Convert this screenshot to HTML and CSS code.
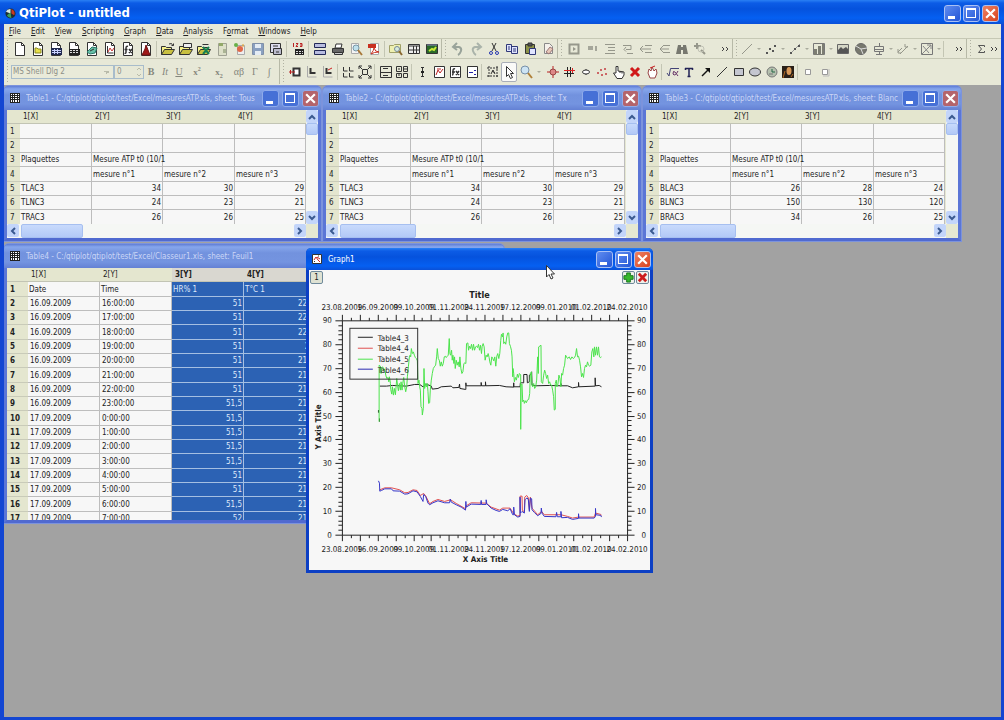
FILE: index.html
```html
<!DOCTYPE html>
<html lang="en">
<head>
<meta charset="utf-8">
<title>QtiPlot - untitled</title>
<link rel="stylesheet" href="styles.css">
</head>
<body>
<div class="app">
  <header class="titlebar titlebar-main">
    <svg class="logo" viewBox="0 0 12 12" aria-hidden="true"><circle cx="6" cy="6" r="5.5" fill="#1c2c34"/><path d="M1 4a5 5 0 0 1 5-3v5z" fill="#d8e8e0"/><path d="M7 1a5 5 0 0 1 3 7l-3-2z" fill="#c83a20"/><path d="M2 8l4-3 1 6a5 5 0 0 1-5-3z" fill="#3aa05a"/></svg>
    <h1 class="app-title">QtiPlot - untitled</h1>
    <div class="winbtns">
      <button class="wb wb-min" aria-label="Minimize"></button>
      <button class="wb wb-max" aria-label="Maximize"></button>
      <button class="wb wb-close" aria-label="Close"><svg viewBox="0 0 12 12"><path d="M2 2l8 8M10 2l-8 8"/></svg></button>
    </div>
  </header>
  <nav class="menubar">
    <button><u>F</u>ile</button><button><u>E</u>dit</button><button><u>V</u>iew</button><button><u>S</u>cripting</button><button><u>G</u>raph</button><button><u>D</u>ata</button><button><u>A</u>nalysis</button><button>F<u>o</u>rmat</button><button><u>W</u>indows</button><button><u>H</u>elp</button>
  </nav>
  <div class="toolrow">
    <div class="toolbar" data-tools="new project table matrix note graph fx surf | open opentpl openexcel appenddoc openobj save savetpl | ascii | dup print preview pdf | explorer results log"></div>
    <div class="toolbar" data-tools="undo redo cut copy paste clear"></div>
    <div class="toolbar wide-end" data-tools="play stop indent unindent left left2 find rescale more"></div>
    <div class="toolbar grow tight" data-tools="line v dots v linedots v bars v area pie box v vectors v threed v | more"></div>
    <div class="toolbar tight last" data-tools="sum more"></div>
  </div>
  <div class="toolrow second">
    <div class="toolbar format">
      <select class="font-name" aria-label="Font" disabled><option>MS Shell Dlg 2</option></select>
      <input class="font-size" aria-label="Font size" value="0" disabled>
      <span class="spin"><svg viewBox="0 0 8 12"><path d="M2 4l2-2 2 2M2 8l2 2 2-2"/></svg></span>
      <button class="ft" disabled><b>B</b></button><button class="ft" disabled><i>It</i></button><button class="ft" disabled><u>U</u></button><button class="ft script" disabled><b>x<sup>2</sup></b></button><button class="ft script" disabled><b>x<sub>2</sub></b></button><button class="ft greek" disabled>αβ</button><button class="ft" disabled>Γ</button><button class="ft" disabled>∫</button>
    </div>
    <div class="toolbar small" data-tools="addlayer axes axes2 | grid4 expand | layout1 layout2 | errbar newgraph newfx newlegend | marquee pointer! zoom v target cross oval reds hand remove pan | root text arrow diag rect ellipse clock photo | sq1 sq2"></div>
  </div>
  <main class="desktop">
    <section class="win win-t1">
      <div class="titlebar"><svg class="wicon"><use href="#w-table"/></svg><h2>Table1 - C:/qtiplot/qtiplot/test/Excel/mesuresATP.xls, sheet: Tous</h2>
        <div class="winbtns"><button class="wb wb-min" aria-label="Minimize"></button><button class="wb wb-max" aria-label="Maximize"></button><button class="wb wb-close" aria-label="Close"><svg viewBox="0 0 12 12"><path d="M2 2l8 8M10 2l-8 8"/></svg></button></div></div>
      <div class="sheet" data-sheet="T"></div>
    </section>
    <section class="win win-t2">
      <div class="titlebar"><svg class="wicon"><use href="#w-table"/></svg><h2>Table2 - C:/qtiplot/qtiplot/test/Excel/mesuresATP.xls, sheet: Tx</h2>
        <div class="winbtns"><button class="wb wb-min" aria-label="Minimize"></button><button class="wb wb-max" aria-label="Maximize"></button><button class="wb wb-close" aria-label="Close"><svg viewBox="0 0 12 12"><path d="M2 2l8 8M10 2l-8 8"/></svg></button></div></div>
      <div class="sheet" data-sheet="T"></div>
    </section>
    <section class="win win-t3">
      <div class="titlebar"><svg class="wicon"><use href="#w-table"/></svg><h2>Table3 - C:/qtiplot/qtiplot/test/Excel/mesuresATP.xls, sheet: Blanc</h2>
        <div class="winbtns"><button class="wb wb-min" aria-label="Minimize"></button><button class="wb wb-max" aria-label="Maximize"></button><button class="wb wb-close" aria-label="Close"><svg viewBox="0 0 12 12"><path d="M2 2l8 8M10 2l-8 8"/></svg></button></div></div>
      <div class="sheet" data-sheet="B"></div>
    </section>
    <section class="win win-t4">
      <div class="titlebar"><svg class="wicon"><use href="#w-table"/></svg><h2>Table4 - C:/qtiplot/qtiplot/test/Excel/Classeur1.xls, sheet: Feuil1</h2></div>
      <div class="sheet" data-sheet="C"></div>
    </section>
    <section class="win win-graph active">
      <div class="titlebar"><svg class="wicon"><use href="#w-graph"/></svg><h2>Graph1</h2>
        <div class="winbtns"><button class="wb wb-min" aria-label="Minimize"></button><button class="wb wb-max" aria-label="Maximize"></button><button class="wb wb-close" aria-label="Close"><svg viewBox="0 0 12 12"><path d="M2 2l8 8M10 2l-8 8"/></svg></button></div></div>
      <div class="graph-body">
        <div class="layerbar"><button class="layer">1</button><span class="space"></span>
          <button class="layer plain" aria-label="Add layer"><svg viewBox="0 0 12 12"><path d="M4 1h4v3h3v4H8v3H4V8H1V4h3z" fill="#37b82c" stroke="#14701a"/></svg></button>
          <button class="layer plain" aria-label="Remove layer"><svg viewBox="0 0 12 12"><path d="M2 2l8 8M10 2l-8 8" stroke="#cc1c1c" stroke-width="3"/></svg></button></div>
        <svg class="plot" viewBox="0 16 342 284" id="plot">
          <g id="axes" stroke="#222" fill="none"></g>
          <g id="axis-labels" class="axis-label"></g>
          <text class="plot-title" x="171" y="28">Title</text>
          <text class="axis-title" x="177" y="292">X Axis Title</text>
          <text class="axis-title" transform="translate(12 157) rotate(-90)">Y Axis Title</text>
          <svg x="-9" y="-30" width="360" height="200" viewBox="0 0 1080 600" fill="none" stroke-width="3">
            <polyline stroke="#222" points="240,438 260,438 278,436 300,437 320,438 345,433 360,433 370,440 380,432 395,438 398,447 415,445 425,440 455,438 460,443 478,442 480,432 481,445 498,448 499,448 499,428 500,437 545,437 545,427 546,437 558,437 558,425 559,437 600,436 620,440 643,441 643,428 643,440 662,440 663,428 673,428 673,403 683,403 684,428 690,425 690,405 695,403 697,395 698,435 710,437 750,436 785,437 785,430 786,437 805,437 820,443 838,440 838,427 839,440 888,438 888,413 889,437 900,436 907,440"/>
            <path stroke="#222" d="M236 510v8M239 535v10"/>
            <polyline stroke="#4be34b" points="238,545 238,375 242,378 244,400 246,383 249,380 252,390 255,386 258,405 261,415 265,412 267,425 269,410 272,430 273,448 276,462 278,440 281,465 284,445 287,464 289,440 291,415 294,440 296,452 299,430 302,450 304,425 307,450 309,430 312,412 315,440 318,455 321,440 323,410 326,380 329,350 331,345 333,350 335,325 338,340 341,335 344,345 347,352 350,355 353,362 355,430 358,420 360,440 362,450 364,500 367,505 368,525 371,505 373,385 375,445 377,430 380,440 383,430 385,455 387,490 390,488 392,450 395,420 398,400 401,385 404,380 408,375 411,350 413,325 416,355 419,360 422,378 425,365 428,378 431,370 434,350 437,348 440,352 443,348 446,345 449,295 451,340 453,345 456,330 458,360 460,345 463,370 465,350 467,385 470,360 473,375 476,365 479,380 481,350 484,385 487,400 490,395 493,370 496,368 499,370 501,310 505,308 507,330 510,318 513,325 516,312 519,330 522,312 525,330 528,320 531,318 534,322 537,312 540,330 543,315 546,340 548,318 551,310 554,320 557,360 560,345 563,350 566,340 569,352 571,365 574,375 577,350 580,355 583,362 586,350 589,378 592,348 595,340 598,355 601,340 604,300 606,282 609,290 611,278 613,310 616,305 619,312 622,290 625,278 628,278 630,310 633,318 636,330 638,350 640,410 641,385 643,400 645,425 648,412 651,420 654,402 657,412 660,400 664,404 664,568 665,435 668,432 670,485 673,480 675,490 678,482 681,488 684,480 688,478 691,460 693,400 696,395 698,435 700,440 703,430 706,445 709,440 712,420 715,350 717,400 718,320 725,315 726,425 730,430 733,405 736,390 739,400 742,415 745,405 748,430 751,425 754,435 757,435 760,450 763,470 765,510 768,508 768,430 771,420 773,440 776,432 779,405 782,415 785,440 787,400 790,405 793,385 796,375 799,345 802,350 805,355 810,350 814,358 818,350 822,355 826,352 829,345 832,325 835,350 838,348 841,360 844,380 847,410 850,400 853,412 856,385 859,375 862,380 865,365 868,375 872,378 875,375 878,335 881,325 884,350 886,320 889,345 892,320 895,345 898,320 901,350 905,352 907,350"/>
          </svg>
          <svg x="-9" y="130" width="360" height="180" viewBox="0 0 1080 540" fill="none" stroke-width="3">
            <polyline stroke="#e05050" points="240,270 255,264 275,264 300,270 315,279 325,278 340,270 352,272 362,287 372,281 378,288 390,312 400,305 415,299 435,305 453,300 470,311 498,327 500,318 515,309 560,310 575,322 600,331 610,325 632,325 643,342 655,349 662,347 662,289 668,289 669,332 675,336 676,292 682,287 687,294 690,330 693,292 698,325 715,345 727,335 735,345 785,345 805,350 820,355 838,352 885,352 889,340 905,344 907,347"/>
            <polyline stroke="#3535c8" points="236,243 239,250 240,274 245,272 255,267 275,267 280,273 300,274 315,283 325,282 340,273 352,276 362,290 370,305 372,284 378,290 385,310 390,315 400,309 415,303 435,309 450,309 452,298 455,307 470,315 485,322 498,331 499,305 500,322 515,313 544,314 545,302 546,314 560,314 560,300 562,312 575,325 590,332 600,335 610,329 625,333 632,327 640,345 643,345 643,322 645,345 655,352 662,350 662,292 663,340 668,335 675,340 677,300 683,294 687,300 690,335 693,295 697,297 698,330 705,338 715,348 725,341 726,325 728,340 735,350 770,351 772,338 774,351 785,351 785,335 787,354 805,353 820,359 838,356 838,342 839,355 885,355 889,350 889,326 890,345 905,347 907,352"/>
          </svg>
          <g class="legend">
            <rect x="41" y="58" width="68" height="51" fill="none" stroke="#333"/>
            <path d="M49 67h15" stroke="#222"/><path d="M49 78h15" stroke="#e05050"/><path d="M49 89h15" stroke="#4be34b"/><path d="M49 99h15" stroke="#2a2ab0"/>
            <text x="69" y="71">Table4_3</text><text x="69" y="81">Table4_4</text><text x="69" y="92">Table4_5</text><text x="69" y="103">Table4_6</text>
          </g>
        </svg>
      </div>
    </section>
    <svg class="cursor" viewBox="0 0 9 15" aria-hidden="true"><path d="M.5.5v11.500l2.500-2.500 2 4.500 2-1-2-4h3.500z" fill="#fff" stroke="#333"/></svg>
  </main>
</div>
<svg class="defs" aria-hidden="true">
  <symbol id="w-table" viewBox="0 0 10 10"><path d="M0 0h10v10H0z" fill="#222"/><path d="M1 1h1v1H1zM3 1h1v1H3zM5 1h2v1H5zM8 1h1v1H8zM1 3h1v1H1zM3 3h1v1H3zM5 3h2v1H5zM8 3h1v1H8zM1 5h1v1H1zM3 5h1v1H3zM5 5h2v1H5zM8 5h1v1H8zM1 7h1v2H1zM3 7h1v2H3zM5 7h2v2H5zM8 7h1v2H8z" fill="#fff"/></symbol>
  <symbol id="w-graph" viewBox="0 0 10 10"><path d="M.5.5h9v9h-9z" fill="#fff" stroke="#333"/><path d="M2 6l2-3 2 3 2 2M5 3l3 2" stroke="#c22" fill="none"/><path d="M2 8l1-1M6 2h1" stroke="#333"/></symbol>
</svg>
<script src="app.js"></script>
</body>
</html>
```

FILE: styles.css
```css
* { box-sizing: border-box; }
html, body { margin: 0; height: 100%; }
body { font: 8px/10px "DejaVu Sans Condensed", "DejaVu Sans", sans-serif; color: #222; background: #0a48d8; overflow: hidden; }
button, input, select { font: inherit; color: inherit; margin: 0; padding: 0; border: 0; background: none; }
h1, h2 { margin: 0; font-weight: normal; }
u { text-underline-offset: 1px; }
.defs { display: none; }

.app { display: flex; flex-direction: column; height: 100vh; border: solid #1346d2; border-width: 0 3px 3px 4px; }

.titlebar { display: flex; align-items: center; flex: none; height: 24px; padding: 0 2px 0 5px; background: linear-gradient(#5f7dd6, #86a6ec 3px, #7292de 9px, #7494e0 18px, #6481d4); color: #cbd6f6; }
.titlebar h2 { flex: 1; padding-top: 1px; font-size: 8px; white-space: nowrap; overflow: hidden; }
.titlebar-main, .active .titlebar { background: linear-gradient(#2a80f4, #0c5ce6 3px, #0552dd 9px, #0560f2 18px, #0a50d8); color: #fff; }
.titlebar-main { margin: 0 -3px 0 -4px; padding: 2px 5px 0 5px; }
.logo { width: 11px; height: 11px; margin-right: 3px; }
.app-title { flex: 1; font: bold 13px/18px "DejaVu Sans Condensed", sans-serif; }
.wicon { width: 10px; height: 10px; margin-right: 6px; }
.winbtns { display: flex; gap: 2px; }
.wb { position: relative; width: 17px; height: 17px; border: 1px solid #a9c0f4; border-radius: 3px; background: linear-gradient(135deg, #5f8cf0, #2456d6); }
.wb svg { display: block; width: 15px; height: 15px; padding: 1px; stroke: #fff; stroke-width: 2; }
.wb-min::after { content: ""; position: absolute; left: 3px; bottom: 2px; width: 7px; height: 3px; background: #fff; }
.wb-max::after { content: ""; position: absolute; inset: 2px 3px 3px 2px; border: 1px solid #fff; border-top-width: 2px; }
.wb-close { background: linear-gradient(135deg, #ee8264, #d8421c); }
.win:not(.active) .wb { background: #4670d6; border-color: #8fabeb; }
.win:not(.active) .wb-close { background: #b4646c; }

.menubar { display: flex; flex: none; height: 14px; background: #e7e8d7; }
.menubar button { padding: 1px 5px 0; }
.toolrow { display: flex; flex: none; height: 21px; background: #e7e8d7; border-top: 1px solid #c6c8b5; border-bottom: 1px solid #c6c8b5; }
.toolrow.second { height: 26px; border-top: 0; border-bottom-color: #e7e8d7; }
.toolbar { display: flex; align-items: center; flex: none; padding-left: 7px; border-right: 1px solid #b7b9a7; background: radial-gradient(circle, #b0b1a2 1px, transparent 1px) 2px 3px / 3px 3px repeat-y; }
.toolbar.tight { padding-left: 5px; }
.toolbar.grow { flex: 1; }
.toolbar.last { width: 34px; border-right: 0; }
.toolbar.small { flex: 1; border-right: 0; }
.toolbar.wide-end { width: 175px; }
.tool { width: 18px; height: 18px; display: flex; align-items: center; justify-content: center; }
.tool svg { width: 14px; height: 14px; fill: none; stroke: #333; flex: none; }
.small .tool { width: 16px; }
.small .tool:nth-child(even) { width: 17px; }
.tool.drop, .small .tool.drop { width: 6px; }
.small .tool.drop { width: 10px; }
.tool.more { width: 12px; margin-left: auto; }
.tool.checked { height: 20px; border: 1px solid #a9aeb8; border-radius: 2px; background: #fafaf8; }
.vsep { width: 4px; height: 16px; background: linear-gradient(#c3c5b3, #c3c5b3) 1px 0 / 1px 100% no-repeat; }

.format { padding-left: 7px; width: 276px; color: #9a9b90; }
.font-name { width: 103px; height: 14px; border: 1px solid #a8bccb; background: linear-gradient(45deg, transparent 50%, #b9bbaa 50%) right 6px top 5px / 3px 3px no-repeat, linear-gradient(-45deg, transparent 50%, #b9bbaa 50%) right 3px top 5px / 3px 3px no-repeat, #e9ead9; color: #8f9088; opacity: 1; appearance: none; padding-left: 1px; }
.font-size { width: 21px; height: 14px; border: 1px solid #a8bccb; border-right: 0; padding-left: 2px; color: #8f9088; }
.spin { width: 9px; height: 14px; border: 1px solid #a8bccb; border-left: 0; }
.spin svg { display: block; width: 8px; height: 12px; fill: none; stroke: #b9bbaa; }
.ft { width: 14px; height: 18px; font-family: "Liberation Serif", serif; font-size: 10px; color: #85867c; }
.ft.script { width: 22px; font-size: 9px; }
.ft.greek { width: 18px; }
.ft sup, .ft sub { font-size: 6px; line-height: 0; }

.desktop { position: relative; flex: 1; background: #a2a2a2; overflow: hidden; }
.win { position: absolute; display: flex; flex-direction: column; border: 3px solid #5b76d6; border-top-width: 0; border-bottom-color: #506ad0; border-radius: 5px 5px 0 0; box-shadow: 0 0 0 1px #7c93dc; background: #5b76d6; }
.win .titlebar { margin: 0 -3px; padding: 0 2px 0 6px; border-radius: 5px 5px 0 0; }
.win .winbtns { gap: 3px; }
.win-t1 { left: 0; top: 1px; width: 317px; height: 155px; }
.win-t2 { left: 319px; top: 1px; width: 318px; height: 155px; }
.win-t3 { left: 639px; top: 1px; width: 318px; height: 155px; }
.win-t4 { left: 0; top: 159px; width: 500px; height: 279px; }
.win-graph { left: 302px; top: 163px; width: 347px; height: 325px; border-color: #0c3fc4; box-shadow: none; }
.win-graph .titlebar { height: 22px; }
.win-graph .winbtns { gap: 2px; }

.sheet { position: relative; flex: 1; min-height: 0; display: grid; grid-template: minmax(0, 1fr) 14px / minmax(0, 1fr) 12px; background: #e6e8d2; overflow: hidden; }
.sheet.wide { grid-template: minmax(0, 1fr) / minmax(0, 1fr); }
.view { overflow: hidden; }
.grid { table-layout: fixed; border-collapse: separate; border-spacing: 0; width: 299px; }
.wide .grid { width: 309px; }
.grid tr { height: 14px; }
.grid tbody tr:nth-child(3n+1) { height: 15px; }
.grid th, .grid td { padding: 1px 0 0; font-weight: normal; white-space: nowrap; line-height: 10px; }
.grid thead th { background: #e4e6cf; border-bottom: 1px solid #c2c4b4; text-align: left; padding-left: 3px; }
.grid tbody th { background: #e4e6cf; border-bottom: 1px solid #c9cbb9; text-align: left; padding-left: 3px; }
.grid td { background: #f7f7f7; border: solid #bdbdbd; border-width: 0 1px 1px 0; padding-left: 1px; }
.grid td.num { text-align: right; padding: 1px 1px 0 0; }
.wide tbody th, .wide thead th.sel { font-weight: bold; }
.wide td.date { padding-left: 2px; }
.wide thead th.sel { background: #d9d7d0; }
.wide td.sel { background: #2c62b4; color: #dfe9fa; border-color: #a5bfe2; }
.rowhead { width: 13px; }
.wide .rowhead { width: 21px; }
.c-a { width: 72px; }
.c-b { width: 71px; }
.vbar, .hbar { display: flex; background: #f5f7f4; }
.vbar { flex-direction: column; }
.sb { flex: none; width: 12px; height: 13px; display: flex; align-items: center; justify-content: center; background: #c3d5fa; border-radius: 2px; }
.sb svg { width: 8px; height: 8px; fill: none; stroke: #3b5a90; stroke-width: 2; }
.thumb { background: linear-gradient(#c8dafc, #b2c9f7); border: 1px solid #a6bff0; border-radius: 2px; }
.vbar .thumb { height: 12px; }
.hbar .thumb { width: 76px; margin-left: 2px; }
.win-t1 .hbar .thumb { width: 62px; }
.fill { flex: 1; }

.graph-body { flex: 1; display: flex; flex-direction: column; background: #f7f7f7; min-height: 0; }
.layerbar { display: flex; gap: 1px; padding: 1px 1px 0; height: 16px; flex: none; }
.space { flex: 1; }
.layer { width: 13px; height: 13px; border: 1px solid #6f8a9c; border-radius: 2px; background: #dfe2d3; line-height: 8px; }
.layer.plain { background: #eef0ea; }
.layer svg { display: block; width: 11px; height: 11px; }
.plot { display: block; width: 100%; flex: 1; min-height: 0; }
.plot text { fill: #222; }
.axis-label text, .legend text { font-size: 8px; }
.axis-label .mid { text-anchor: middle; }
.axis-label .end { text-anchor: end; }
.plot-title { font-size: 9px; font-weight: bold; text-anchor: middle; }
.axis-title { font-size: 8px; font-weight: bold; text-anchor: middle; }
.cursor { position: absolute; left: 542px; top: 180px; width: 9px; height: 15px; }
```

FILE: app.js
```js
const page = '<path d="M2.500.500h6l3 3v10h-9z" fill="#fff"/><path d="M8.500.500v3h3"/>';
const folder = '<path d="M.500 12.500v-8h4l1 1h5v2" fill="#f4f08a"/><path d="M.500 12.500l3-5h10l-3 5z" fill="#c8c040"/>';
const gray = 'stroke="#96978b"';
const icons = {
  new: page,
  project: page + '<path d="M4 11V6h2l1 1h3v4z" fill="#e8e04a" stroke="#888820"/>',
  table: page + '<path d="M2 6h11v7H2z" fill="#222a50" stroke="none"/><path d="M3 8.500h9M3 10.500h9M5.500 7v5M8.500 7v5" stroke="#c8d0ff"/>',
  matrix: page + '<path d="M2 7h11v6H2z" fill="#222" stroke="none"/><path d="M3 8.500h9M3 10.500h9" stroke="#ddd" stroke-dasharray="2 1"/>',
  note: page + '<path d="M2 10l5-5 5 1-2 5-5 1z" fill="#68c0a8" stroke="#2a7868"/><path d="M5 9l4-2"/>',
  graph: page + '<path d="M4.500 4v7h6" /><path d="M5 10l2-4 2 3 2-3" stroke="#c33"/>',
  fx: page + '<path d="M7 4.500q-2-1-2 2v4q0 1-1.500 1M3.500 7.500h3M8 7l3 4M11 7l-3 4" stroke-width="1.500"/>',
  surf: page + '<path d="M3 13l3-6 1-4 2 5 2 5z" fill="#a01818" stroke="#701010"/>',
  open: folder + '<path d="M8 2q3-2 4 2M10.500 3.500h2v-2"/>',
  opentpl: folder + '<path d="M4.500 1.500h8v4h-8z" fill="#eee"/>',
  openexcel: folder + '<path d="M6 5l6 7M12 5l-6 7" stroke="#168050" stroke-width="2"/><path d="M5.500 2.500h6"/>',
  appenddoc: '<path d="M3.500 1.500h8v12h-8z" fill="#dde0c8" stroke="#a0a294"/><path d="M4 1h4v3H4z" fill="#92a868" stroke="none"/><path d="M8 8h3M8 10h3" stroke="#788860"/>',
  openobj: '<path d="M4.500 3.500h7v9h-7z" fill="#eee" stroke="#aaa"/><circle cx="3" cy="3" r="2" fill="#68b048" stroke="none"/><circle cx="7" cy="7" r="3" fill="#e06848" stroke="none"/><path d="M10 2v3" stroke="#e8a020"/>',
  save: '<path d="M1.500 1.500h11v11h-11z" fill="#8aa0c0" stroke="#8090a8"/><path d="M4 2h6v4H4zM4 9h6v4H4z" fill="#e4ecf4" stroke="none"/>',
  savetpl: '<path d="M1.500 1.500h10v9h-10z" fill="#dde" /><path d="M4.500 6.500h8v6h-8z" fill="#bbc"/><path d="M4 4h5M7 10h3"/>',
  ascii: '<path d="M2.500 1v4M5 1.500h2L5 4.500h2M9 1.500h2v3H9M9 3h2" stroke="#b22"/><path d="M4 7h9v6H4z" fill="#222" stroke="none"/><path d="M5 9.500h7M5 11.500h7" stroke="#ddd" stroke-dasharray="2 1"/>',
  dup: '<path d="M1.500 1.500h11v4h-11zM1.500 8.500h11v4h-11z" fill="#b8bce0" stroke="#222858"/>',
  print: '<path d="M4 6l1-4h6l-1 4z" fill="#fff"/><path d="M1.500 6.500h11v4h-11z" fill="#666"/><path d="M3.500 10.500h8v2h-8z" fill="#ccc"/>',
  preview: '<path d="M2.500 1.500h7v10h-7z" fill="#f4f4f4" stroke="#aaa"/><circle cx="7" cy="6" r="3" fill="#bfe0ec" stroke="#7898a8"/><path d="M9 8l4 5" stroke="#a87838" stroke-width="2"/>',
  pdf: '<path d="M3.500 1.500h8v11h-8z" fill="#fff" stroke="#aaa"/><path d="M1 2h8v4H1z" fill="#c83020" stroke="none"/><path d="M4 12q3-4 3-6q1 4 5 4q-5 0-8 2" stroke="#c83020"/>',
  explorer: '<path d="M.500 3.500h4l1-1h6v8H.500z" fill="#eef0b0" stroke="#a0a068"/><circle cx="8" cy="7" r="2.500" fill="#d8ecdc" stroke="#789"/><path d="M10 9l3 4" stroke="#8a6830" stroke-width="2"/>',
  results: '<path d="M1.500 2.500h11v9h-11z" fill="#eee"/><path d="M2 4h10M6.500 4v8M9.500 4v8M2 8h10"/>',
  log: '<path d="M1.500 2.500h11v9h-11z" fill="#286828"/><path d="M2 3h10" stroke="#88b"/><path d="M4 9l3-2 2 1 2-3" stroke="#c8e838" stroke-width="2"/>',
  undo: '<path d="M3 5h5q3 1 2 4-1 3-3 4M6 1L2 5l4 3" stroke="#99a39a" stroke-width="2"/>',
  redo: '<path d="M11 5H6Q3 6 4 9q1 3 3 4M8 1l4 4-4 3" stroke="#aab3aa" stroke-width="2"/>',
  cut: '<path d="M5 1l4 8M9 1L5 9"/><circle cx="4" cy="11" r="1.500" stroke="#2838b0"/><circle cx="10" cy="11" r="1.500" stroke="#2838b0"/>',
  copy: '<path d="M1.500 2.500h5v7h-5zM6.500 4.500h6v7h-6z" fill="#e0e4ff" stroke="#303878"/><path d="M3 5h2M3 7h2M8 7h3M8 9h3" stroke="#303878"/>',
  paste: '<path d="M2.500 2.500h9v9h-9z" fill="#8a9048"/><path d="M5 1h4v3H5z" fill="#555"/><path d="M6.500 6.500h6v6h-6z" fill="#e0e4ff" stroke="#303878"/>',
  clear: '<path d="M3.500 1.500h5l3 3v7h-8z" fill="#f4f0ea" stroke="#888"/><path d="M5 10l4-5 3 2-4 5z" fill="#e8c8b8" stroke="#977"/>',
  play: `<path d="M2.500 2.500h9v9h-9z" ${gray} stroke-width="2"/><path d="M6 5l3 2-3 2z" fill="#96978b" stroke="none"/>`,
  stop: '<path d="M3 4h5v4H3zM10 4h2v5h-2z" fill="#a5a69a" stroke="none"/>',
  indent: `<path d="M2 2.500h10M5 5.500h7M5 8.500h7M2 11.500h10" ${gray}/>`,
  unindent: `<path d="M2 3.500h8v4H5M6 11.500h6M5 5l-2 2.500 2 2" ${gray}/>`,
  left: `<path d="M6 3.500h7M6 10.500h7M1 7h11M4 4L1 7l3 3" ${gray}/>`,
  left2: `<path d="M6 3.500h7M6 10.500h7M3 7h9M6 4L3 7l3 3" ${gray}/>`,
  find: '<path d="M1 12l2-9h3v9zM8 12V3h3l2 9zM5 5h4v3H5z" fill="#77786f" stroke="none"/>',
  rescale: `<path d="M4 1v6M1 4h7M8 8l4 4" ${gray} stroke-width="2"/><circle cx="8" cy="7" r="3" stroke="#c0c1b4"/>`,
  more: '<path d="M3 5l2 2-2 2M7 5l2 2-2 2" stroke="#444"/>',
  line: `<path d="M2 12L12 2" ${gray}/>`,
  dots: '<path d="M2 10h2v2H2zM5 6h2v2H5zM8 8h2v2H8zM10 3h2v2h-2z" fill="#555" stroke="none"/>',
  linedots: '<path d="M2 12L12 2" stroke="#999"/><path d="M2 10h2v2H2zM6 6h2v2H6zM10 3h2v2h-2z" fill="#555" stroke="none"/>',
  bars: '<path d="M1.500 1.500h11v11h-11z" stroke="#777"/><path d="M2 7h3v6H2zM6 4h3v9H6zM10 2h2v11h-2z" fill="#7c7d72" stroke="none"/>',
  area: '<path d="M1.500 2.500h11v9h-11z" fill="#d5d6c6" stroke="#666"/><path d="M2 11V8l3-3 2 2 3-2 2 2v4z" fill="#555" stroke="none"/>',
  pie: '<circle cx="7" cy="7" r="5.500" fill="#77786e" stroke="#666"/><path d="M7 7L2 4M7 7l6-1M7 7l2 5" stroke="#ddd"/>',
  box: '<path d="M2.500 4.500h9v5h-9zM2 7.500h10M7.500 1v3M7.500 10v3M4 12.500h6" stroke="#777"/>',
  vectors: `<path d="M2 10l4-4M4 12l8-8M2 7v4h3M9 2v3h3" ${gray}/>`,
  threed: '<path d="M1.500 1.500h11v11h-11z" stroke="#777"/><path d="M2 12l9-9M7 3h4v4M3 4l6 7" stroke="#888"/>',
  sum: '<path d="M10.500 5V3.500h-6l3 3.500-3 3.500h6V9" stroke="#555"/>',
  addlayer: '<path d="M5.500 3.500h6v7h-6z" fill="#fff" stroke-width="2"/><path d="M1 7h6M2.500 5v4" stroke="#b22"/>',
  axes: '<path d="M2.500 1v11h9" stroke="#aaa"/><path d="M5.500 3v5h5" stroke-width="2"/>',
  axes2: '<path d="M2.500 1v11h9" stroke="#aaa"/><path d="M5.500 3v5h5" stroke-width="2"/><path d="M7 5l4-2" stroke="#c22"/>',
  grid4: '<path d="M2.500 2v4h4M2.500 8v4h4M8.500 2v4h4M8.500 8v4h4"/>',
  expand: '<path d="M4.500 4.500h5v5h-5zM1 4V1h3M10 1h3v3M13 10v3h-3M4 13H1v-3M1 1l3 3M13 1l-3 3M1 13l3-3M13 13l-3-3"/>',
  layout1: '<path d="M1.500 1.500h11v11h-11zM2 7.500h10M4 3.500h5M4 10.500h5"/>',
  layout2: '<path d="M1.500 1.500h5v5h-5zM8.500 1.500h4v5h-4zM1.500 8.500h5v4h-5zM8.500 8.500h4v4h-4z"/><path d="M3 4h2M9 4h3M3 10h2"/>',
  errbar: '<path d="M7.500 2v10M6 2.500h3M6 11.500h3"/><path d="M6 6h3v2H6z" fill="#222" stroke="none"/>',
  newgraph: '<path d="M2.500 1.500h10v11h-10z" fill="#fff"/><path d="M4 10l2-5 2 3 3-4M5 4h4" stroke="#b22"/>',
  newfx: '<path d="M2.500 1.500h10v11h-10z" fill="#fff"/><path d="M7 4q-2-1-2 2v3q0 1-1 1M4 7h3M8 6l3 4M11 6l-3 4" stroke-width="1.500"/>',
  newlegend: '<path d="M2.500 1.500h10v11h-10z" fill="#fff"/><path d="M4 7.500h4M9 5.500h2M9 9.500h2" stroke="#22a"/>',
  marquee: '<path d="M1 3h12M1 11h12M3 1v12M11 1v12" stroke-dasharray="2 1"/><path d="M5 9l2-4 2 4M6 6l3 2"/>',
  pointer: '<path d="M4.500 1.500v10l2-2 2 4 2-1-2-4h3z" fill="#fff"/>',
  zoom: '<circle cx="6" cy="5" r="4" fill="#cde4f4" stroke="#7890a8"/><path d="M9 8l4 5" stroke="#b08038" stroke-width="2"/>',
  target: '<path d="M7 1v12M1 7h12" stroke="#b22"/><circle cx="7" cy="7" r="3" fill="#d88" stroke="#944"/>',
  cross: '<path d="M5.500 2v10M8.500 2v10M2 8.500h10" stroke="#222"/><path d="M2 5.500h11M10.500 3v5" stroke="#d22"/>',
  oval: '<ellipse cx="7" cy="7" rx="3.500" ry="2" fill="#fff"/><path d="M7 4v1M7 9v1"/>',
  reds: '<path d="M2 7h2v2H2zM5 4h2v2H5zM9 3h2v2H9zM6 9h2v2H6zM10 8h2v2h-2z" fill="#c66" stroke="none"/>',
  hand: '<path d="M4 8V1.500h2V6l6 1v3l-2 3.500H5L1.500 8z" fill="#fff"/><path d="M8 6v2M10 6.500v2"/>',
  remove: '<path d="M3 3l8 8M11 3l-8 8" stroke="#d01818" stroke-width="3"/>',
  pan: '<path d="M3 8l1-4 2 2 1-4 2 4 2-2 1 4-2 5H5z" fill="#fff" stroke="#944"/><path d="M5 3l5-2" stroke="#c22"/>',
  root: '<path d="M1 8l2 3 1.500-7.500H13" stroke="#447"/><path d="M12 6q-3 6-5 3 0-4 2-2l3 4" stroke="#636"/>',
  text: '<path d="M3 3.500h8M7 3v9M5.500 11.500h3M3.500 3v2M10.500 3v2" stroke="#225" stroke-width="1.500"/>',
  arrow: '<path d="M3 11l6-6" stroke="#111" stroke-width="1.500"/><path d="M6 3h5v5z" fill="#111" stroke="none"/>',
  diag: '<path d="M2 12L12 2"/>',
  rect: '<path d="M2.500 3.500h9v7h-9z" fill="#c4c6d0"/>',
  ellipse: '<ellipse cx="7" cy="7" rx="5.500" ry="4" fill="#c4c6d0"/>',
  clock: '<circle cx="7" cy="7" r="5" fill="#b5c0ae" stroke="#777"/><path d="M7 4v3h3" stroke="#264"/><path d="M4 9h4" stroke="#777"/>',
  photo: '<path d="M1 1h12v12H1z" fill="#2a2018" stroke="none"/><ellipse cx="8" cy="6" rx="2.500" ry="4" fill="#d89858" stroke="none"/><path d="M2 13l2-7M10 12l2-3" stroke="#b06820"/>',
  sq1: '<path d="M4.500 4.500h5v5h-5z" fill="#fff" stroke="#999"/>',
  sq2: '<path d="M4.500 4.500h5v5h-5z" fill="#fff" stroke="#999"/><path d="M11 4v7H5" stroke="#bbb"/>',
  v: '<path d="M5 6h4l-2 2z" fill="#aaab9d" stroke="none"/>'
};

document.querySelectorAll('[data-tools]').forEach(bar => {
  bar.innerHTML = bar.dataset.tools.split(' ').map(key => {
    if (key === '|') return '<span class="vsep"></span>';
    const name = key.replace('!', '');
    const extra = name === 'v' ? ' drop' : name === 'more' ? ' more' : key !== name ? ' checked' : '';
    return `<button class="tool${extra}" aria-label="${name}"><svg viewBox="0 0 14 14">${icons[name]}</svg></button>`;
  }).join('');
});

const measures = (names, values) => [
  ['', '', '', ''], ['', '', '', ''],
  ['Plaquettes', 'Mesure ATP t0 (10/1', '', ''],
  ['', 'mesure n°1', 'mesure n°2', 'mesure n°3'],
  ...names.map((n, i) => [n, ...values[i]])
];
const hr = [51, 51, 51, 51, 51, 51, 51, '51,5', '51,5', '51,5', '51,5', '51,5', 51, 51, '51,5', 52];
const sheets = {
  T: measures(['TLAC3', 'TLNC3', 'TRAC3'], [[34, 30, 29], [24, 23, 21], [26, 26, 25]]),
  B: measures(['BLAC3', 'BLNC3', 'BRAC3'], [[26, 28, 24], [150, 130, 120], [34, 26, 25]]),
  C: [['Date', 'Time', 'HR% 1', 'T°C 1'], ...hr.map((value, i) => [
    i < 8 ? '16.09.2009' : '17.09.2009', `${(16 + i) % 24}:00:00`, value, i < 3 ? '22,5' : i === 3 ? 22 : '21,5'
  ])]
};
const arrow = d => `<button class="sb" aria-label="Scroll"><svg viewBox="0 0 8 8"><path d="${d}"/></svg></button>`;

document.querySelectorAll('[data-sheet]').forEach(el => {
  const wide = el.dataset.sheet === 'C';
  el.classList.toggle('wide', wide);
  const sel = c => wide && c > 1 ? 'sel' : '';
  const head = ['1[X]', '2[Y]', '3[Y]', '4[Y]'].map((h, c) => `<th class="${sel(c)}">${h}</th>`).join('');
  const body = sheets[el.dataset.sheet].map((row, r) => `<tr><th>${r + 1}</th>${row.map((v, c) => {
    const num = typeof v === 'number' || (wide && c > 1 && r > 0);
    return `<td class="${sel(c)} ${num ? 'num' : ''} ${wide && r > 0 ? 'date' : ''}">${v}</td>`;
  }).join('')}</tr>`).join('');
  const second = wide ? 'c-a' : 'c-b';
  el.innerHTML = `<div class="view"><table class="grid"><colgroup><col class="rowhead"><col class="c-a"><col class="${second}"><col class="c-a"><col></colgroup><thead><tr><th></th>${head}</tr></thead><tbody>${body}</tbody></table></div>` +
    (wide ? '' : `<div class="vbar">${arrow('M1 6l3-3 3 3')}<div class="thumb"></div><div class="fill"></div>${arrow('M1 2l3 3 3-3')}</div>
    <div class="hbar">${arrow('M6 1L3 4l3 3')}<div class="thumb"></div><div class="fill"></div>${arrow('M2 1l3 3-3 3')}</div><div></div>`);
});

// Plot frame, ticks and tick labels
const box = { left: 34, right: 320, top: 50, bottom: 265 };
let ticks = `M${box.left} ${box.top}H${box.right}V${box.bottom}H${box.left}Z`;
let labels = '';
for (let v = 0; v <= 90; v += 2) {
  const y = Math.round(box.bottom - v * (box.bottom - box.top) / 90);
  const len = v % 10 ? 4 : 7;
  ticks += `M${box.left} ${y}h-${len}M${box.right} ${y}h${len}`;
  if (v % 10 === 0) labels += `<text class="end" x="23" y="${y + 3}">${v}</text><text class="end" x="338" y="${y + 3}">${v}</text>`;
}
for (let i = 0; i <= 32; i++) {
  const x = Math.round(box.left + i * (box.right - box.left) / 32);
  const len = i % 2 ? 3 : 6;
  ticks += `M${x} ${box.top}v-${len}M${x} ${box.bottom}v${len}`;
}
['23.08.2009', '16.09.2009', '09.10.2009', '01.11.2009', '24.11.2009', '17.12.2009', '09.01.2010', '01.02.2010', '24.02.2010'].forEach((date, i) => {
  const x = box.left + Math.round(i * (box.right - box.left) / 8) - 1;
  labels += `<text class="mid" x="${x}" y="40">${date}</text><text class="mid" x="${x}" y="282">${date}</text>`;
});
document.getElementById('axes').innerHTML = `<path d="${ticks}" transform="translate(-.5 .5)"/>`;
document.getElementById('axis-labels').innerHTML = labels;
```
